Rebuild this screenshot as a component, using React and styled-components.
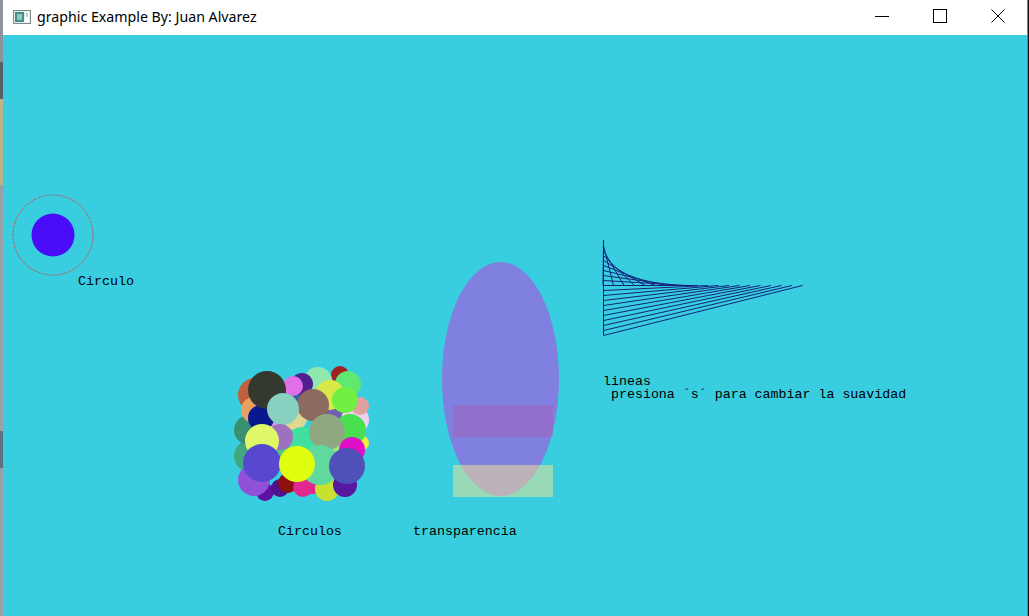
import styled, { createGlobalStyle } from 'styled-components'

const Global = createGlobalStyle`
html, body {
  margin: 0;
  padding: 0;
  background: #1b1b1b;
  overflow: hidden;
}
`

const Screen = styled.div`
display: flex;
width: 1029px;
height: 616px;
background: #111;
`

const DesktopEdge = styled.div`
width: 3px;
flex: none;
background: linear-gradient(#8d939b 0 10%, #59606a 10% 16%, #bdb486 16% 30%, #9aa0a8 30% 70%, #5d7282 70% 76%, #9aa0a8 76%);
`

const Window = styled.div`
display: flex;
flex-direction: column;
width: 1024px;
flex: none;
border-right: 1px solid #7d7d7d;
background: #fff;
`

const TitleBar = styled.div`
display: flex;
align-items: center;
height: 35px;
flex: none;
background: #fff;
`

const AppIcon = styled.svg`
width: 18px;
height: 14px;
margin: 0 6px 1px 10px;
flex: none;
`

const Title = styled.div`
flex: 1;
font-family: "Noto Sans", "Open Sans", sans-serif;
font-size: 14.2px;
color: #000;
white-space: nowrap;
padding-bottom: 2px;
`

const Controls = styled.div`
display: flex;
height: 100%;
`

const ControlButton = styled.div`
width: 58px;
height: 100%;
display: flex;
align-items: center;
justify-content: center;
svg {
  width: 14px;
  height: 14px;
  margin-top: -3px;
}
`

const Canvas = styled.svg`
display: block;
width: 1024px;
height: 581px;
background: #38cedf;
`

const Label = styled.text`
font-family: "Liberation Mono", "DejaVu Sans Mono", monospace;
font-size: 13.3px;
fill: #000;
white-space: pre;
`

// back to front, like the sketch drew them
const circles = [
  [255, 395, 17, '#c06040'],
  [300, 400, 18, '#3a60a0'],
  [332, 410, 18, '#7060b0'],
  [250, 456, 16, '#40a880'],
  [312, 476, 18, '#e02890'],
  [340, 450, 18, '#a0e880'],
  [290, 446, 18, '#50c880'],
  [270, 420, 16, '#d0a0e0'],
  [355, 420, 14, '#f0d0f0'],
  [265, 492, 9, '#6010a0'],
  [340, 375, 9, '#a02020'],
  [318, 381, 14, '#90e8b0'],
  [302, 384, 11, '#502090'],
  [348, 384, 13, '#60e870'],
  [360, 406, 9, '#e0a0a0'],
  [249, 430, 15, '#389070'],
  [254, 410, 13, '#e8a060'],
  [261, 418, 13, '#0a1890'],
  [293, 386, 10, '#e070e8'],
  [330, 395, 15, '#d8e848'],
  [345, 400, 13, '#70f040'],
  [267, 390, 19, '#33392f'],
  [295, 418, 12, '#e0d890'],
  [313, 405, 16, '#8c6a60'],
  [283, 409, 16, '#88d0c0'],
  [302, 441, 14, '#40e0a0'],
  [362, 443, 7, '#f0f040'],
  [350, 430, 16, '#48e050'],
  [327, 432, 18, '#90a880'],
  [280, 437, 13, '#a070c0'],
  [262, 441, 17, '#e0f868'],
  [352, 450, 13, '#e010c8'],
  [280, 488, 9, '#501090'],
  [288, 483, 10, '#901010'],
  [303, 487, 10, '#e02890'],
  [327, 489, 12, '#c8e030'],
  [345, 485, 12, '#5818a0'],
  [254, 480, 16, '#9050d8'],
  [262, 463, 19, '#5848d0'],
  [320, 465, 20, '#60d8a0'],
  [297, 464, 18, '#e0ff10'],
  [347, 466, 18, '#5050b8'],
]

const lines = Array.from({ length: 20 }, (_, i) => [240 + i * 5, 603 + i * 10.5])

function App() {
  return (
    <>
      <Global />
      <Screen>
        <DesktopEdge />
        <Window>
          <TitleBar>
            <AppIcon viewBox="0 0 18 14">
              <rect x="0.5" y="0.5" width="17" height="13" fill="#e8eef0" stroke="#7a8a8c" />
              <rect x="2" y="2" width="9" height="10" fill="#3f8f86" />
              <rect x="4" y="4" width="5" height="6" fill="#8fc9c2" />
              <rect x="12" y="2" width="4" height="10" fill="#fff" />
              <line x1="14" y1="3" x2="14" y2="7" stroke="#8a9aa0" />
            </AppIcon>
            <Title>graphic Example By: Juan Alvarez</Title>
            <Controls>
              <ControlButton>
                <svg viewBox="0 0 14 14">
                  <line x1="0" y1="7.5" x2="14" y2="7.5" stroke="#000" />
                </svg>
              </ControlButton>
              <ControlButton>
                <svg viewBox="0 0 14 14">
                  <rect x="0.5" y="0.5" width="13" height="13" fill="none" stroke="#000" />
                </svg>
              </ControlButton>
              <ControlButton>
                <svg viewBox="0 0 14 14">
                  <path d="M0.5 0.5 L13.5 13.5 M13.5 0.5 L0.5 13.5" stroke="#000" />
                </svg>
              </ControlButton>
            </Controls>
          </TitleBar>
          <Canvas viewBox="3 35 1024 581">
            <circle cx="53" cy="235" r="40" fill="none" stroke="#c05a62" strokeWidth="1" strokeDasharray="3 1" />
            <circle cx="53" cy="235" r="21.5" fill="#4a0cf8" />
            <Label x="78" y="285">Circulo</Label>

            {circles.map(([cx, cy, r, c], i) => (
              <circle key={i} cx={cx} cy={cy} r={r} fill={c} />
            ))}
            <Label x="278" y="535">Circulos</Label>

            <ellipse cx="500.5" cy="379" rx="58.5" ry="117" fill="rgb(198, 49, 225)" fillOpacity="0.5" />
            <rect x="453" y="405" width="100" height="32" fill="rgb(180, 80, 160)" fillOpacity="0.35" />
            <rect x="453" y="465" width="100" height="32" fill="rgb(248, 229, 145)" fillOpacity="0.5" />
            <Label x="413" y="535">transparencia</Label>

            <line x1="603.5" y1="240" x2="603.5" y2="335" stroke="#13237d" />
            {lines.map(([y, x2], i) => (
              <line key={i} x1="603.5" y1={y + 0.5} x2={x2} y2="285.5" stroke="#13237d" strokeWidth="1" />
            ))}
            <Label x="603" y="385">lineas</Label>
            <Label x="603" y="398">{' presiona ´s´ para cambiar la suavidad'}</Label>
          </Canvas>
        </Window>
      </Screen>
    </>
  )
}

export default App
